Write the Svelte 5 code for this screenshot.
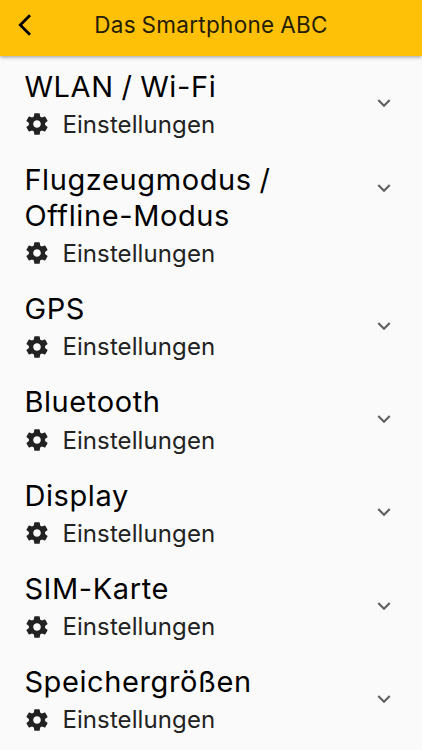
<script>
  const title = "Das Smartphone ABC";

  const topics = [
    { name: "WLAN / Wi-Fi" },
    { name: "Flugzeugmodus / Offline-Modus", tall: true },
    { name: "GPS" },
    { name: "Bluetooth" },
    { name: "Display" },
    { name: "SIM-Karte" },
    { name: "Speichergrößen" },
  ];

  let openTopic = $state("");

  function toggleTopic(name) {
    openTopic = openTopic === name ? "" : name;
  }
</script>

<div class="screen">
  <header class="app-bar">
    <button class="back" aria-label="Zurück">
      <svg viewBox="0 0 24 24" width="26" height="26">
        <path fill="currentColor" d="M17.51 3.87 15.73 2.1 5.84 12l9.9 9.9 1.77-1.77L9.38 12z" />
      </svg>
    </button>
    <h1>{title}</h1>
  </header>

  <main class="topics">
    {#each topics as topic}
      <button
        class="topic"
        class:tall={topic.tall}
        aria-expanded={openTopic === topic.name}
        onclick={() => toggleTopic(topic.name)}
      >
        <span class="text">
          <span class="name">{topic.name}</span>
          <span class="category">
            <svg class="gear" viewBox="0 0 24 24" width="26" height="26">
              <path
                fill="currentColor"
                d="M19.43 12.98c.04-.32.07-.64.07-.98s-.03-.66-.07-.98l2.11-1.65c.19-.15.24-.42.12-.64l-2-3.46c-.12-.22-.39-.3-.61-.22l-2.49 1c-.52-.4-1.08-.73-1.69-.98l-.38-2.65C14.46 2.18 14.25 2 14 2h-4c-.25 0-.46.18-.49.42l-.38 2.65c-.61.25-1.17.59-1.69.98l-2.49-1c-.23-.09-.49 0-.61.22l-2 3.46c-.13.22-.07.49.12.64l2.11 1.65c-.04.32-.07.65-.07.98s.03.66.07.98l-2.11 1.65c-.19.15-.24.42-.12.64l2 3.46c.12.22.39.3.61.22l2.49-1c.52.4 1.08.73 1.69.98l.38 2.65c.03.24.24.42.49.42h4c.25 0 .46-.18.49-.42l.38-2.65c.61-.25 1.17-.59 1.69-.98l2.49 1c.23.09.49 0 .61-.22l2-3.46c.12-.22.07-.49-.12-.64l-2.11-1.65zM12 15.5c-1.93 0-3.5-1.57-3.5-3.5s1.57-3.5 3.5-3.5 3.5 1.57 3.5 3.5-1.57 3.5-3.5 3.5z"
              />
            </svg>
            <span>Einstellungen</span>
          </span>
        </span>
        <svg class="chevron" class:open={openTopic === topic.name} viewBox="0 0 24 24" width="26" height="26">
          <path fill="currentColor" d="M7.41 8.59 12 13.17l4.59-4.58L18 10l-6 6-6-6z" />
        </svg>
      </button>
    {/each}
  </main>
</div>

<style>
  :global(body) {
    background: #fafafa;
  }

  .screen {
    height: 750px;
    overflow: hidden;
    display: flex;
    flex-direction: column;
    background: #fafafa;
    color: #000;
    font-family: Inter, "Liberation Sans", sans-serif;
  }

  button {
    padding: 0;
    border: 0;
    background: none;
    color: inherit;
    font: inherit;
    text-align: left;
    cursor: pointer;
  }

  .app-bar {
    z-index: 1;
    flex: none;
    height: 56px;
    box-sizing: border-box;
    padding: 0 12px 6px;
    display: grid;
    grid-template-columns: 26px 1fr 26px;
    align-items: center;
    background: #ffc107;
    box-shadow: 0 1px 4px rgba(0, 0, 0, 0.4);
  }

  .back {
    display: flex;
  }

  h1 {
    margin: 0;
    text-align: center;
    color: #251d05;
    font-size: 22.5px;
    font-weight: 400;
    line-height: 30px;
    letter-spacing: 0.3px;
    word-spacing: -1px;
    white-space: nowrap;
  }

  .topics {
    display: flex;
    flex-direction: column;
    padding: 12.6px 25px 0 24.4px;
  }

  .topic {
    flex: none;
    display: flex;
    align-items: flex-start;
    justify-content: space-between;
    padding-bottom: 21.3px;
  }

  .text {
    display: flex;
    flex-direction: column;
    max-width: 290px;
  }

  .name {
    font-size: 29px;
    font-weight: 400;
    line-height: 36px;
    letter-spacing: 0.6px;
    word-spacing: -1px;
    font-variant-ligatures: none;
  }

  .category {
    height: 36px;
    padding-top: 3.2px;
    box-sizing: border-box;
    display: flex;
    align-items: center;
    gap: 12px;
    color: #222;
    font-size: 24px;
    font-weight: 400;
    letter-spacing: 0.1px;
  }

  .gear {
    flex: none;
  }

  .chevron {
    margin-top: 21.6px;
    color: #616161;
  }

  .tall .chevron {
    margin-top: 13px;
  }

  .chevron.open {
    transform: rotate(180deg);
  }
</style>
